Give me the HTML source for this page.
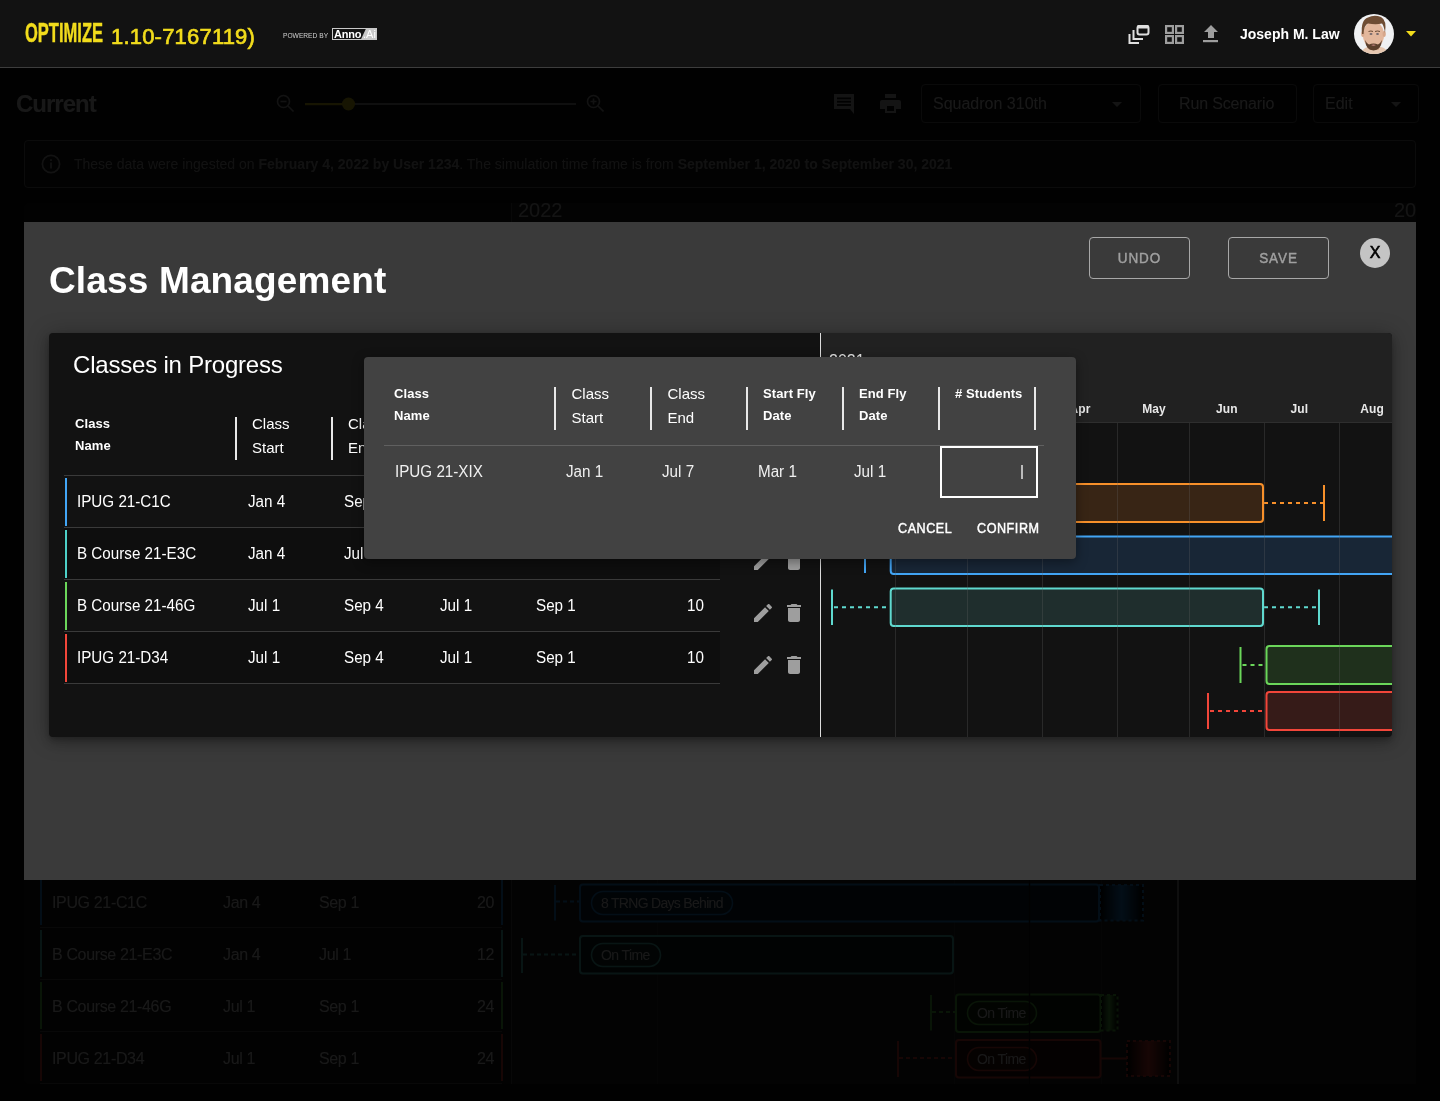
<!DOCTYPE html>
<html><head><meta charset="utf-8">
<style>
*{margin:0;padding:0;box-sizing:border-box}
html,body{width:1440px;height:1101px;overflow:hidden;background:#000;font-family:"Liberation Sans",sans-serif;color:#fff}
.a{position:absolute}
.t{position:absolute;white-space:nowrap;line-height:1}
#app{position:absolute;left:0;top:0;width:1440px;height:1101px;background:#121212}
#ov{position:absolute;left:0;top:0;width:1440px;height:1101px;background:rgba(0,0,0,0.905)}
#hdr{position:absolute;left:0;top:0;width:1440px;height:68px;background:#121212;border-bottom:1px solid #3d3d3d}
.md{-webkit-text-stroke:0.45px currentColor}
</style></head><body>
<div id="root" style="position:absolute;left:0;top:0;width:1440px;height:1101px;overflow:hidden;will-change:transform">
<div id="app">
  <div class="t" style="left:16px;top:91.7px;font-size:24px;font-weight:bold;color:#fff;letter-spacing:-1px">Current</div>
  <!-- zoom slider -->
  <svg class="a" style="left:274px;top:92px" width="330" height="22" viewBox="274 92 330 22">
    <g fill="none" stroke="#bdbdbd" stroke-width="1.6">
      <circle cx="283.5" cy="101.5" r="6"/><path d="M288 106 L293.5 111.5"/><path d="M280.5 101.5 H286.5"/>
      <circle cx="593.5" cy="101.5" r="6"/><path d="M598 106 L603.5 111.5"/><path d="M590.5 101.5 H596.5 M593.5 98.5 V104.5"/>
    </g>
    <rect x="305" y="103" width="271" height="2" fill="#9a9a9a"/>
    <rect x="305" y="103" width="44" height="2.2" fill="#f2dc1c"/>
    <circle cx="348.5" cy="104" r="6.5" fill="#f2dc1c"/>
  </svg>
  <!-- chat/print -->
  <svg class="a" style="left:833px;top:94px" width="22" height="20" viewBox="0 0 22 20">
    <path d="M1 0 H20 Q21 0 21 1 V15 H17 L21 20 V15 Z" fill="#cfcfcf"/>
    <path d="M1 0 H20 Q21 0 21 1 V15 H1 Z" fill="#cfcfcf"/>
    <rect x="4" y="3.5" width="14" height="1.8" fill="#121212"/>
    <rect x="4" y="6.8" width="14" height="1.8" fill="#121212"/>
    <rect x="4" y="10.1" width="14" height="1.8" fill="#121212"/>
  </svg>
  <svg class="a" style="left:880px;top:94px" width="21" height="20" viewBox="0 0 21 20">
    <rect x="5" y="0" width="11" height="4" fill="#cfcfcf"/>
    <path d="M2 6 H19 Q21 6 21 8 V15 H16 V19 H5 V15 H0 V8 Q0 6 2 6Z" fill="#cfcfcf"/>
    <rect x="7" y="12" width="7" height="5" fill="#121212"/>
  </svg>
  <div class="a" style="left:921px;top:84px;width:220px;height:39px;border:1px solid #6a6a6a;border-radius:4px"></div>
  <div class="t" style="left:933px;top:96px;font-size:16px;color:#fff">Squadron 310th</div>
  <svg class="a" style="left:1112px;top:102px" width="10" height="5" viewBox="0 0 10 5"><path d="M0 0H10L5 5Z" fill="#cfcfcf"/></svg>
  <div class="a" style="left:1158px;top:84px;width:139px;height:39px;border:1px solid #6a6a6a;border-radius:4px"></div>
  <div class="t" style="left:1179px;top:96px;font-size:16px;color:#fff;letter-spacing:-0.15px">Run Scenario</div>
  <div class="a" style="left:1313px;top:84px;width:106px;height:39px;border:1px solid #6a6a6a;border-radius:4px"></div>
  <div class="t" style="left:1325px;top:96px;font-size:16px;color:#fff">Edit</div>
  <svg class="a" style="left:1391px;top:102px" width="10" height="5" viewBox="0 0 10 5"><path d="M0 0H10L5 5Z" fill="#cfcfcf"/></svg>
  <!-- info bar -->
  <div class="a" style="left:24px;top:140px;width:1392px;height:48px;border:1px solid #777;border-radius:4px;background:#181818"></div>
  <svg class="a" style="left:41px;top:154px" width="20" height="20" viewBox="0 0 20 20">
    <circle cx="10" cy="10" r="8.6" fill="none" stroke="#bdbdbd" stroke-width="1.7"/>
    <rect x="9.1" y="8.5" width="1.8" height="6" fill="#bdbdbd"/><rect x="9.1" y="5.2" width="1.8" height="1.8" fill="#bdbdbd"/>
  </svg>
  <div class="t" style="left:74px;top:157px;font-size:14px;color:#b8b8b8">These data were ingested on <b>February 4, 2022 by User 1234</b>. The simulation time frame is from <b>September 1, 2020 to September 30, 2021</b></div>
  <!-- main card behind -->
  <div class="a" style="left:24px;top:203px;width:1392px;height:881px;background:#1e1e1e;border-radius:6px"></div>
  <div class="a" style="left:512px;top:203px;width:904px;height:881px;background:#282828"></div>
  <div class="a" style="left:511px;top:203px;width:1px;height:881px;background:#5a5a5a"></div>
  <div class="t" style="left:518px;top:200px;font-size:20px;color:#cfcfcf">2022</div>
  <div class="t" style="left:1394px;top:200px;font-size:20px;color:#cfcfcf">20</div>
  <div class="a" style="left:1177px;top:222px;width:2px;height:862px;background:#9a9a9a"></div>
  <!-- rows behind -->
  <div class="a" style="left:40px;top:874px;width:462px;height:210px">
    <div class="a" style="left:0;top:4px;width:2px;height:47px;background:#2196f3"></div>
    <div class="a" style="left:0;top:56px;width:2px;height:47px;background:#5ce1d6"></div>
    <div class="a" style="left:0;top:108px;width:2px;height:47px;background:#63d94f"></div>
    <div class="a" style="left:0;top:160px;width:2px;height:47px;background:#f44336"></div>
    <div class="a" style="left:461px;top:4px;width:2px;height:47px;background:#2196f3"></div>
    <div class="a" style="left:461px;top:56px;width:2px;height:47px;background:#5ce1d6"></div>
    <div class="a" style="left:461px;top:108px;width:2px;height:47px;background:#63d94f"></div>
    <div class="a" style="left:461px;top:160px;width:2px;height:47px;background:#f44336"></div>
    <div class="a" style="left:0;top:53px;width:462px;height:1px;background:#555"></div>
    <div class="a" style="left:0;top:105px;width:462px;height:1px;background:#555"></div>
    <div class="a" style="left:0;top:157px;width:462px;height:1px;background:#555"></div>
    <div class="a" style="left:0;top:209px;width:462px;height:1px;background:#555"></div>
  </div>
  <div class="t" style="left:52px;top:895px;font-size:16px;color:#fff;letter-spacing:-0.35px">IPUG 21-C1C</div>
  <div class="t" style="left:52px;top:947px;font-size:16px;color:#fff;letter-spacing:-0.35px">B Course 21-E3C</div>
  <div class="t" style="left:52px;top:999px;font-size:16px;color:#fff;letter-spacing:-0.35px">B Course 21-46G</div>
  <div class="t" style="left:52px;top:1051px;font-size:16px;color:#fff;letter-spacing:-0.35px">IPUG 21-D34</div>
  <div class="t" style="left:223px;top:895px;font-size:16px;color:#fff;letter-spacing:-0.35px">Jan 4</div>
  <div class="t" style="left:223px;top:947px;font-size:16px;color:#fff;letter-spacing:-0.35px">Jan 4</div>
  <div class="t" style="left:223px;top:999px;font-size:16px;color:#fff;letter-spacing:-0.35px">Jul 1</div>
  <div class="t" style="left:223px;top:1051px;font-size:16px;color:#fff;letter-spacing:-0.35px">Jul 1</div>
  <div class="t" style="left:319px;top:895px;font-size:16px;color:#fff;letter-spacing:-0.35px">Sep 1</div>
  <div class="t" style="left:319px;top:947px;font-size:16px;color:#fff;letter-spacing:-0.35px">Jul 1</div>
  <div class="t" style="left:319px;top:999px;font-size:16px;color:#fff;letter-spacing:-0.35px">Sep 1</div>
  <div class="t" style="left:319px;top:1051px;font-size:16px;color:#fff;letter-spacing:-0.35px">Sep 1</div>
  <div class="t" style="left:444px;top:895px;width:50px;text-align:right;font-size:16px;color:#fff;letter-spacing:-0.35px">20</div>
  <div class="t" style="left:444px;top:947px;width:50px;text-align:right;font-size:16px;color:#fff;letter-spacing:-0.35px">12</div>
  <div class="t" style="left:444px;top:999px;width:50px;text-align:right;font-size:16px;color:#fff;letter-spacing:-0.35px">24</div>
  <div class="t" style="left:444px;top:1051px;width:50px;text-align:right;font-size:16px;color:#fff;letter-spacing:-0.35px">24</div>
  <!-- gantt behind -->
  <svg class="a" style="left:512px;top:870px" width="904" height="215" viewBox="512 870 904 215">
    <g stroke="#3a3a3a" stroke-width="1"><path d="M657.5 880V1084 M954.5 880V1084 M1101.5 880V1084"/></g>
    <g fill="none" stroke-width="2">
      <!-- row1 blue -->
      <path d="M555 885V920.5" stroke="#2196f3"/>
      <path d="M556 901.5H579" stroke="#2196f3" stroke-dasharray="4 3"/>
      <rect x="580" y="884.5" width="519" height="37" rx="3" stroke="#2196f3" fill="#0d2438"/>
      <rect x="1100" y="885" width="43" height="35.5" stroke="#2196f3" stroke-dasharray="3 3" fill="url(#gb)"/>
      <rect x="591.5" y="891.5" width="141" height="23" rx="11.5" stroke="#2196f3" stroke-width="1.5" fill="#0f2a40"/>
      <!-- row2 teal -->
      <path d="M522 938V973" stroke="#5ce1d6"/>
      <path d="M523 954.5H579" stroke="#5ce1d6" stroke-dasharray="4 3"/>
      <rect x="580" y="936" width="373" height="37.5" rx="3" stroke="#5ce1d6" fill="#122828"/>
      <rect x="591.5" y="943.5" width="69" height="23" rx="11.5" stroke="#5ce1d6" stroke-width="1.5" fill="#163030"/>
      <!-- row3 green -->
      <path d="M931 995V1030.5" stroke="#63d94f"/>
      <path d="M932 1012H955" stroke="#63d94f" stroke-dasharray="4 3"/>
      <rect x="956" y="994.5" width="144.5" height="37.5" rx="3" stroke="#63d94f" fill="#142410"/>
      <rect x="1101" y="995" width="16.5" height="35.5" stroke="#63d94f" stroke-dasharray="3 3" fill="url(#gg)"/>
      <rect x="967.5" y="1001.5" width="69" height="23" rx="11.5" stroke="#63d94f" stroke-width="1.5" fill="#182c12"/>
      <!-- row4 red -->
      <path d="M898 1041V1077" stroke="#f44336"/>
      <path d="M899 1058H955" stroke="#f44336" stroke-dasharray="4 3"/>
      <rect x="956" y="1040" width="144.5" height="37.5" rx="3" stroke="#f44336" fill="#2a1210"/>
      <path d="M1101 1058.5H1127" stroke="#f44336"/>
      <rect x="1127" y="1041" width="43" height="35" stroke="#f44336" stroke-dasharray="3 3" fill="url(#gr)"/>
      <rect x="967.5" y="1047.5" width="69" height="23" rx="11.5" stroke="#f44336" stroke-width="1.5" fill="#3a1612"/>
    </g>
    <path d="M1029.5 880V1084" stroke="#121212" stroke-width="1.5"/>
    <defs>
      <linearGradient id="gb"><stop offset="0" stop-color="#000"/><stop offset="0.5" stop-color="#2196f3"/><stop offset="1" stop-color="#000"/></linearGradient>
      <linearGradient id="gg"><stop offset="0" stop-color="#000"/><stop offset="0.5" stop-color="#63d94f"/><stop offset="1" stop-color="#000"/></linearGradient>
      <linearGradient id="gr"><stop offset="0" stop-color="#000"/><stop offset="0.5" stop-color="#f44336"/><stop offset="1" stop-color="#000"/></linearGradient>
    </defs>
  </svg>
  <div class="t" style="left:601px;top:896px;font-size:14px;color:#fff;letter-spacing:-0.7px">8 TRNG Days Behind</div>
  <div class="t" style="left:601px;top:948px;font-size:14px;color:#fff;letter-spacing:-0.6px">On Time</div>
  <div class="t" style="left:977px;top:1006px;font-size:14px;color:#fff;letter-spacing:-0.6px">On Time</div>
  <div class="t" style="left:977px;top:1052px;font-size:14px;color:#fff;letter-spacing:-0.6px">On Time</div>
</div>

<div id="ov"></div>
<div id="hdr">
  <div class="t" style="left:24.5px;top:18.5px;font-size:28px;font-weight:bold;color:#f2dc1c;-webkit-text-stroke:0.5px #f2dc1c;transform:scaleX(0.59);transform-origin:0 0">OPTIMIZE</div>
  <div class="t" style="left:111px;top:25.5px;font-size:22px;color:#f2dc1c;-webkit-text-stroke:0.7px #f2dc1c;letter-spacing:0.2px">1.10-7167119)</div>
  <div class="t" style="left:283px;top:32px;font-size:7px;color:#d0d0d0;transform:scaleX(0.95);transform-origin:0 0">POWERED BY</div>
  <div class="a" style="left:332px;top:28px;width:45px;height:12px;border:1px solid #c8c8c8;background:#121212;overflow:hidden">
    <div class="a" style="left:30px;top:-2px;width:20px;height:16px;background:#c8c8c8;transform:skewX(-25deg)"></div>
    <div class="t" style="left:1px;top:0px;font-size:11px;font-weight:bold;color:#fff;letter-spacing:-0.2px">Anno</div>
    <div class="t" style="left:30px;top:0px;font-size:11px;color:#fff;">.Ai</div>
  </div>
  <!-- icons -->
  <svg class="a" style="left:1128px;top:24px" width="22" height="20" viewBox="0 0 22 20">
    <g fill="none" stroke="#e0e0e0" stroke-width="2">
      <rect x="9.5" y="2" width="11" height="8.5" rx="2"/>
      <path d="M5.5 6 V15 H15"/>
      <path d="M1.5 10 V19 H11"/>
    </g>
    <rect x="9" y="1" width="12" height="3.5" rx="1.5" fill="#e0e0e0"/>
  </svg>
  <svg class="a" style="left:1165px;top:25px" width="20" height="19" viewBox="0 0 20 19">
    <g fill="none" stroke="#9e9e9e" stroke-width="2.2">
      <rect x="1.1" y="1.1" width="6.8" height="6.8"/>
      <rect x="11.1" y="1.1" width="6.8" height="6.8"/>
      <rect x="1.1" y="11.1" width="6.8" height="6.8"/>
      <rect x="11.1" y="11.1" width="6.8" height="6.8"/>
    </g>
  </svg>
  <svg class="a" style="left:1203px;top:25px" width="16" height="18" viewBox="0 0 16 18">
    <path d="M8 0 L15 7 H11 V13 H5 V7 H1 Z" fill="#9e9e9e"/>
    <rect x="0" y="15" width="15" height="2.2" fill="#9e9e9e"/>
  </svg>
  <div class="t" style="left:1240px;top:27px;font-size:14px;font-weight:bold;color:#fff;letter-spacing:0px">Joseph M. Law</div>
  <div class="a" style="left:1354px;top:14px;width:40px;height:40px;border-radius:50%;background:#f0f1f3;overflow:hidden">
    <svg width="40" height="40" viewBox="0 0 40 40">
      <path d="M6 40 Q9 34 14 33 H27 Q32 34 35 40 Z" fill="#e6c7b0"/>
      <path d="M15 30 H25 V36 H15Z" fill="#d9b095"/>
      <ellipse cx="19.5" cy="21" rx="10.5" ry="13.5" fill="#e3b79c"/>
      <ellipse cx="8.8" cy="20" rx="1.6" ry="3" fill="#d8a88c"/>
      <ellipse cx="30.2" cy="20" rx="1.6" ry="3" fill="#d8a88c"/>
      <path d="M8 20 Q6.5 6 14 3.5 Q20 0.5 27 3 Q33 6 31 19 Q30 12 28 9.5 Q22 11 14 9.5 Q10 11 9.5 20 Z" fill="#6e4c33"/>
      <path d="M11 26 Q12 36.5 19.5 36.5 Q27 36.5 28 26 Q26 30 24 30.5 Q19.5 28.5 15 30.5 Q13 30 11 26Z" fill="#5b3f2c"/>
      <path d="M17 31 Q19.5 30 22 31 Q19.5 32.5 17 31Z" fill="#c98a86"/>
      <path d="M14.5 17.5 Q17 16.5 19 17.5" stroke="#6a4a35" stroke-width="1" fill="none"/>
      <path d="M21 17.5 Q23.5 16.5 26 17.5" stroke="#6a4a35" stroke-width="1" fill="none"/>
      <ellipse cx="17" cy="20" rx="1.5" ry="0.8" fill="#4a4a58"/>
      <ellipse cx="23.5" cy="20" rx="1.5" ry="0.8" fill="#4a4a58"/>
    </svg>
  </div>
  <svg class="a" style="left:1406px;top:31px" width="10" height="6" viewBox="0 0 10 6"><path d="M0 0 H10 L5 5.5Z" fill="#f2dc1c"/></svg>
</div>

<div class="a" style="left:24px;top:222px;width:1392px;height:658px;background:#3a3a3a"></div>
<div class="t" style="left:49px;top:261.68px;font-size:37px;font-weight:bold;letter-spacing:0.15px">Class Management</div>
<div class="a" style="left:1089px;top:237px;width:101px;height:42px;border:1px solid #a8a8a8;border-radius:4px"></div>
<div class="t md" style="left:1089px;top:249.6px;font-size:15px;width:101px;text-align:center;color:#a0a0a0;letter-spacing:1px;transform:scaleX(0.9);transform-origin:50% 0">UNDO</div>
<div class="a" style="left:1228px;top:237px;width:101px;height:42px;border:1px solid #a8a8a8;border-radius:4px"></div>
<div class="t md" style="left:1228px;top:249.6px;font-size:15px;width:101px;text-align:center;color:#a0a0a0;letter-spacing:1px;transform:scaleX(0.9);transform-origin:50% 0">SAVE</div>
<div class="a" style="left:1360px;top:238px;width:30px;height:30px;border-radius:50%;background:#c4c4c4"></div>
<div class="t" style="left:1360px;top:245.36px;font-size:16px;width:30px;text-align:center;color:#000;-webkit-text-stroke:0.6px #000">X</div>
<div class="a" style="left:49px;top:333px;width:1343px;height:404px;background:#121212;border-radius:4px;box-shadow:0 3px 5px -1px rgba(0,0,0,.2),0 6px 10px rgba(0,0,0,.14),0 2px 22px rgba(0,0,0,.3)"></div>
<div class="a" style="left:821px;top:333px;width:571px;height:90px;background:#212121;border-top-right-radius:4px"></div>
<div class="t" style="left:73px;top:352.68px;font-size:24px;letter-spacing:-0.2px">Classes in Progress</div>
<div class="t" style="left:75px;top:416.8px;font-size:13px;font-weight:bold;letter-spacing:0.1px">Class</div>
<div class="t" style="left:75px;top:439.0px;font-size:13px;font-weight:bold;letter-spacing:0.1px">Name</div>
<div class="a" style="left:235px;top:417px;width:2px;height:43px;background:#e8e8e8"></div>
<div class="t" style="left:252px;top:416.2px;font-size:15px;">Class</div>
<div class="t" style="left:252px;top:440.2px;font-size:15px;">Start</div>
<div class="a" style="left:331px;top:417px;width:2px;height:43px;background:#e8e8e8"></div>
<div class="t" style="left:348px;top:416.2px;font-size:15px;">Class</div>
<div class="t" style="left:348px;top:440.2px;font-size:15px;">End</div>
<div class="a" style="left:427px;top:417px;width:2px;height:43px;background:#e8e8e8"></div>
<div class="a" style="left:523px;top:417px;width:2px;height:43px;background:#e8e8e8"></div>
<div class="a" style="left:64px;top:475px;width:656px;height:1px;background:#3a3a3a"></div>
<div class="a" style="left:64px;top:476px;width:656px;height:51px;background:#121212"></div>
<div class="a" style="left:64px;top:527px;width:656px;height:1px;background:#3a3a3a"></div>
<div class="a" style="left:65px;top:478px;width:2px;height:48px;background:#42a5f5"></div>
<div class="t" style="left:76.5px;top:494.46px;font-size:16px;transform:scaleX(0.95);transform-origin:0 0">IPUG 21-C1C</div>
<div class="t" style="left:247.5px;top:494.46px;font-size:16px;transform:scaleX(0.95);transform-origin:0 0">Jan 4</div>
<div class="t" style="left:343.5px;top:494.46px;font-size:16px;transform:scaleX(0.95);transform-origin:0 0">Sep 1</div>
<div class="t" style="left:439.5px;top:494.46px;font-size:16px;transform:scaleX(0.95);transform-origin:0 0">Jan 4</div>
<div class="t" style="left:535.5px;top:494.46px;font-size:16px;transform:scaleX(0.95);transform-origin:0 0">Sep 1</div>
<div class="t" style="left:654px;top:494.46px;font-size:16px;width:50px;text-align:right;transform:scaleX(0.95);transform-origin:100% 0">20</div>
<svg class="a" style="left:751px;top:497px" width="24" height="24" viewBox="0 0 24 24"><path fill="#9e9e9e" d="M3 17.25V21h3.75L17.81 9.94l-3.75-3.75L3 17.25zM20.71 7.04c.39-.39.39-1.02 0-1.41l-2.34-2.34c-.39-.39-1.020-.39-1.41 0l-1.83 1.83 3.75 3.75 1.83-1.83z"/></svg>
<svg class="a" style="left:782px;top:497px" width="24" height="24" viewBox="0 0 24 24"><path fill="#9e9e9e" d="M6 19c0 1.1.9 2 2 2h8c1.1 0 2-.9 2-2V7H6v12zM19 4h-3.5l-1-1h-5l-1 1H5v2h14V4z"/></svg>
<div class="a" style="left:64px;top:528px;width:656px;height:51px;background:#0e0e0e"></div>
<div class="a" style="left:64px;top:579px;width:656px;height:1px;background:#3a3a3a"></div>
<div class="a" style="left:65px;top:530px;width:2px;height:48px;background:#4dd0c8"></div>
<div class="t" style="left:76.5px;top:546.46px;font-size:16px;transform:scaleX(0.95);transform-origin:0 0">B Course 21-E3C</div>
<div class="t" style="left:247.5px;top:546.46px;font-size:16px;transform:scaleX(0.95);transform-origin:0 0">Jan 4</div>
<div class="t" style="left:343.5px;top:546.46px;font-size:16px;transform:scaleX(0.95);transform-origin:0 0">Jul 1</div>
<div class="t" style="left:439.5px;top:546.46px;font-size:16px;transform:scaleX(0.95);transform-origin:0 0">Jan 4</div>
<div class="t" style="left:535.5px;top:546.46px;font-size:16px;transform:scaleX(0.95);transform-origin:0 0">Jul 1</div>
<div class="t" style="left:654px;top:546.46px;font-size:16px;width:50px;text-align:right;transform:scaleX(0.95);transform-origin:100% 0">12</div>
<svg class="a" style="left:751px;top:549px" width="24" height="24" viewBox="0 0 24 24"><path fill="#9e9e9e" d="M3 17.25V21h3.75L17.81 9.94l-3.75-3.75L3 17.25zM20.71 7.04c.39-.39.39-1.02 0-1.41l-2.34-2.34c-.39-.39-1.020-.39-1.41 0l-1.83 1.83 3.75 3.75 1.83-1.83z"/></svg>
<svg class="a" style="left:782px;top:549px" width="24" height="24" viewBox="0 0 24 24"><path fill="#9e9e9e" d="M6 19c0 1.1.9 2 2 2h8c1.1 0 2-.9 2-2V7H6v12zM19 4h-3.5l-1-1h-5l-1 1H5v2h14V4z"/></svg>
<div class="a" style="left:64px;top:580px;width:656px;height:51px;background:#121212"></div>
<div class="a" style="left:64px;top:631px;width:656px;height:1px;background:#3a3a3a"></div>
<div class="a" style="left:65px;top:582px;width:2px;height:48px;background:#6bd65a"></div>
<div class="t" style="left:76.5px;top:598.46px;font-size:16px;transform:scaleX(0.95);transform-origin:0 0">B Course 21-46G</div>
<div class="t" style="left:247.5px;top:598.46px;font-size:16px;transform:scaleX(0.95);transform-origin:0 0">Jul 1</div>
<div class="t" style="left:343.5px;top:598.46px;font-size:16px;transform:scaleX(0.95);transform-origin:0 0">Sep 4</div>
<div class="t" style="left:439.5px;top:598.46px;font-size:16px;transform:scaleX(0.95);transform-origin:0 0">Jul 1</div>
<div class="t" style="left:535.5px;top:598.46px;font-size:16px;transform:scaleX(0.95);transform-origin:0 0">Sep 1</div>
<div class="t" style="left:654px;top:598.46px;font-size:16px;width:50px;text-align:right;transform:scaleX(0.95);transform-origin:100% 0">10</div>
<svg class="a" style="left:751px;top:601px" width="24" height="24" viewBox="0 0 24 24"><path fill="#9e9e9e" d="M3 17.25V21h3.75L17.81 9.94l-3.75-3.75L3 17.25zM20.71 7.04c.39-.39.39-1.02 0-1.41l-2.34-2.34c-.39-.39-1.020-.39-1.41 0l-1.83 1.83 3.75 3.75 1.83-1.83z"/></svg>
<svg class="a" style="left:782px;top:601px" width="24" height="24" viewBox="0 0 24 24"><path fill="#9e9e9e" d="M6 19c0 1.1.9 2 2 2h8c1.1 0 2-.9 2-2V7H6v12zM19 4h-3.5l-1-1h-5l-1 1H5v2h14V4z"/></svg>
<div class="a" style="left:64px;top:632px;width:656px;height:51px;background:#0e0e0e"></div>
<div class="a" style="left:64px;top:683px;width:656px;height:1px;background:#3a3a3a"></div>
<div class="a" style="left:65px;top:634px;width:2px;height:48px;background:#f2463a"></div>
<div class="t" style="left:76.5px;top:650.46px;font-size:16px;transform:scaleX(0.95);transform-origin:0 0">IPUG 21-D34</div>
<div class="t" style="left:247.5px;top:650.46px;font-size:16px;transform:scaleX(0.95);transform-origin:0 0">Jul 1</div>
<div class="t" style="left:343.5px;top:650.46px;font-size:16px;transform:scaleX(0.95);transform-origin:0 0">Sep 4</div>
<div class="t" style="left:439.5px;top:650.46px;font-size:16px;transform:scaleX(0.95);transform-origin:0 0">Jul 1</div>
<div class="t" style="left:535.5px;top:650.46px;font-size:16px;transform:scaleX(0.95);transform-origin:0 0">Sep 1</div>
<div class="t" style="left:654px;top:650.46px;font-size:16px;width:50px;text-align:right;transform:scaleX(0.95);transform-origin:100% 0">10</div>
<svg class="a" style="left:751px;top:653px" width="24" height="24" viewBox="0 0 24 24"><path fill="#9e9e9e" d="M3 17.25V21h3.75L17.81 9.94l-3.75-3.75L3 17.25zM20.71 7.04c.39-.39.39-1.02 0-1.41l-2.34-2.34c-.39-.39-1.020-.39-1.41 0l-1.83 1.83 3.75 3.75 1.83-1.83z"/></svg>
<svg class="a" style="left:782px;top:653px" width="24" height="24" viewBox="0 0 24 24"><path fill="#9e9e9e" d="M6 19c0 1.1.9 2 2 2h8c1.1 0 2-.9 2-2V7H6v12zM19 4h-3.5l-1-1h-5l-1 1H5v2h14V4z"/></svg>
<svg class="a" style="left:821px;top:333px;overflow:hidden" width="571" height="404" viewBox="821 333 571 404">
<defs><clipPath id="cc"><rect x="821" y="333" width="571" height="404" rx="4"/></clipPath></defs><g clip-path="url(#cc)">
<path d="M821 422.5H1392" stroke="#2e2e2e" stroke-width="1"/>
<text x="931.5" y="413.3" font-size="12" font-weight="bold" fill="#e8e8e8" text-anchor="middle" font-family="Liberation Sans" letter-spacing="0.1">Feb</text>
<text x="1005" y="413.3" font-size="12" font-weight="bold" fill="#e8e8e8" text-anchor="middle" font-family="Liberation Sans" letter-spacing="0.1">Mar</text>
<text x="1080" y="413.3" font-size="12" font-weight="bold" fill="#e8e8e8" text-anchor="middle" font-family="Liberation Sans" letter-spacing="0.1">Apr</text>
<text x="1154" y="413.3" font-size="12" font-weight="bold" fill="#e8e8e8" text-anchor="middle" font-family="Liberation Sans" letter-spacing="0.1">May</text>
<text x="1226.8" y="413.3" font-size="12" font-weight="bold" fill="#e8e8e8" text-anchor="middle" font-family="Liberation Sans" letter-spacing="0.1">Jun</text>
<text x="1299.3" y="413.3" font-size="12" font-weight="bold" fill="#e8e8e8" text-anchor="middle" font-family="Liberation Sans" letter-spacing="0.1">Jul</text>
<text x="1372.1" y="413.3" font-size="12" font-weight="bold" fill="#e8e8e8" text-anchor="middle" font-family="Liberation Sans" letter-spacing="0.1">Aug</text>
<text x="829" y="366" font-size="16" fill="#e8e8e8" font-family="Liberation Sans">2021</text>
<rect x="1001" y="484" width="262" height="38" rx="3" fill="#382515" stroke="#f7902a" stroke-width="2"/><path d="M1000 485V521" stroke="#f7902a" stroke-width="2"/><path d="M1002 503.0H1000" stroke="#f7902a" stroke-width="2" stroke-dasharray="4 4"/><path d="M1264 503.0H1324" stroke="#f7902a" stroke-width="2" stroke-dasharray="4 4"/><path d="M1324 485V521" stroke="#f7902a" stroke-width="2"/>
<rect x="890.7" y="536.5" width="508.29999999999995" height="37.5" rx="3" fill="#182636" stroke="#42a5f5" stroke-width="2"/><path d="M865 537.5V573" stroke="#42a5f5" stroke-width="2"/><path d="M867 555.25H889.7" stroke="#42a5f5" stroke-width="2" stroke-dasharray="4 4"/>
<rect x="890.7" y="588.5" width="372.29999999999995" height="37.5" rx="3" fill="#1f2e2d" stroke="#5fd9cf" stroke-width="2"/><path d="M832 589.5V625" stroke="#5fd9cf" stroke-width="2"/><path d="M834 607.25H889.7" stroke="#5fd9cf" stroke-width="2" stroke-dasharray="4 4"/><path d="M1264 607.25H1319" stroke="#5fd9cf" stroke-width="2" stroke-dasharray="4 4"/><path d="M1319 589.5V625" stroke="#5fd9cf" stroke-width="2"/>
<rect x="1266.5" y="646" width="132.5" height="38" rx="3" fill="#1f301c" stroke="#6bd65a" stroke-width="2"/><path d="M1240.5 647V683" stroke="#6bd65a" stroke-width="2"/><path d="M1242.5 665.0H1265.5" stroke="#6bd65a" stroke-width="2" stroke-dasharray="4 4"/>
<rect x="1266.5" y="692" width="132.5" height="38" rx="3" fill="#361b18" stroke="#f2463a" stroke-width="2"/><path d="M1208 693V729" stroke="#f2463a" stroke-width="2"/><path d="M1210 711.0H1265.5" stroke="#f2463a" stroke-width="2" stroke-dasharray="4 4"/>
<path d="M895.5 423V737" stroke="rgba(100,100,100,0.28)" stroke-width="1"/>
<path d="M967.5 423V737" stroke="rgba(100,100,100,0.28)" stroke-width="1"/>
<path d="M1042.5 423V737" stroke="rgba(100,100,100,0.28)" stroke-width="1"/>
<path d="M1117.5 423V737" stroke="rgba(100,100,100,0.28)" stroke-width="1"/>
<path d="M1189.5 423V737" stroke="rgba(100,100,100,0.28)" stroke-width="1"/>
<path d="M1264.5 423V737" stroke="rgba(100,100,100,0.28)" stroke-width="1"/>
<path d="M1339.5 423V737" stroke="rgba(100,100,100,0.28)" stroke-width="1"/>
</g></svg>
<div class="a" style="left:820px;top:333px;width:1px;height:404px;background:#dcdcdc"></div>
<div class="a" style="left:364px;top:357px;width:712px;height:202px;background:#424242;border-radius:4px;box-shadow:0 3px 12px rgba(0,0,0,0.4)"></div>
<div class="t" style="left:394px;top:386.9px;font-size:13px;font-weight:bold;letter-spacing:0.1px">Class</div>
<div class="t" style="left:394px;top:408.8px;font-size:13px;font-weight:bold;letter-spacing:0.1px">Name</div>
<div class="a" style="left:554px;top:387px;width:2px;height:43px;background:#e8e8e8"></div>
<div class="a" style="left:650px;top:387px;width:2px;height:43px;background:#e8e8e8"></div>
<div class="a" style="left:746px;top:387px;width:2px;height:43px;background:#e8e8e8"></div>
<div class="a" style="left:842px;top:387px;width:2px;height:43px;background:#e8e8e8"></div>
<div class="a" style="left:938px;top:387px;width:2px;height:43px;background:#e8e8e8"></div>
<div class="a" style="left:1034px;top:387px;width:2px;height:43px;background:#e8e8e8"></div>
<div class="t" style="left:571.5px;top:386.3px;font-size:15px;">Class</div>
<div class="t" style="left:571.5px;top:410.2px;font-size:15px;">Start</div>
<div class="t" style="left:667.5px;top:386.3px;font-size:15px;">Class</div>
<div class="t" style="left:667.5px;top:410.2px;font-size:15px;">End</div>
<div class="t" style="left:763px;top:387.0px;font-size:13px;font-weight:bold;letter-spacing:0.1px">Start Fly</div>
<div class="t" style="left:763px;top:409.1px;font-size:13px;font-weight:bold;letter-spacing:0.1px">Date</div>
<div class="t" style="left:859px;top:387.0px;font-size:13px;font-weight:bold;letter-spacing:0.1px">End Fly</div>
<div class="t" style="left:859px;top:409.1px;font-size:13px;font-weight:bold;letter-spacing:0.1px">Date</div>
<div class="t" style="left:955px;top:387.0px;font-size:13px;font-weight:bold;letter-spacing:0.1px"># Students</div>
<div class="a" style="left:384px;top:445px;width:660px;height:1px;background:#606060"></div>
<div class="t" style="left:394.5px;top:464.46px;font-size:16px;color:#f0f0f0;transform:scaleX(0.95);transform-origin:0 0">IPUG 21-XIX</div>
<div class="t" style="left:565.5px;top:464.46px;font-size:16px;color:#f0f0f0;transform:scaleX(0.95);transform-origin:0 0">Jan 1</div>
<div class="t" style="left:661.5px;top:464.46px;font-size:16px;color:#f0f0f0;transform:scaleX(0.95);transform-origin:0 0">Jul 7</div>
<div class="t" style="left:757.5px;top:464.46px;font-size:16px;color:#f0f0f0;transform:scaleX(0.95);transform-origin:0 0">Mar 1</div>
<div class="t" style="left:853.5px;top:464.46px;font-size:16px;color:#f0f0f0;transform:scaleX(0.95);transform-origin:0 0">Jul 1</div>
<div class="a" style="left:940px;top:446px;width:98px;height:52px;border:2px solid #fff"></div>
<div class="a" style="left:1021px;top:465px;width:1.5px;height:14px;background:#bbb"></div>
<div class="t md" style="left:898px;top:521.15px;font-size:14px;letter-spacing:0.6px;transform:scaleX(0.9);transform-origin:0 0">CANCEL</div>
<div class="t md" style="left:977px;top:521.15px;font-size:14px;letter-spacing:0.6px;transform:scaleX(0.9);transform-origin:0 0">CONFIRM</div>
</div></body></html>
